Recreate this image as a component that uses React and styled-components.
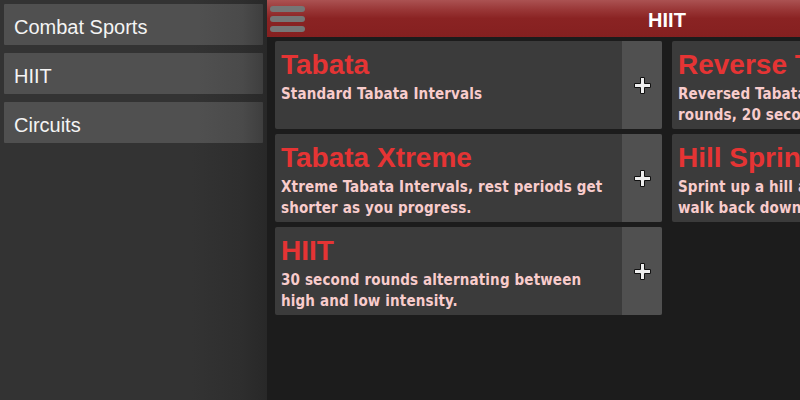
import React from "react";
import styled, { createGlobalStyle } from "styled-components";

const GlobalStyle = createGlobalStyle`
  html, body { margin: 0; padding: 0; background: #1c1c1c; overflow: hidden; }
  #root { width: 800px; height: 400px; overflow: hidden; }
`;

const Layout = styled.div`
  display: flex;
  width: 800px;
  height: 400px;
  overflow: hidden;
`;

const Sidebar = styled.nav`
  flex: 0 0 267px;
  box-sizing: border-box;
  padding: 4px;
  display: flex;
  flex-direction: column;
  gap: 8px;
  background: linear-gradient(to right, #333333 0%, #333333 72%, #2e2e2e 90%, #282828 100%);
`;

const SideItem = styled.div`
  height: 41px;
  box-sizing: border-box;
  display: flex;
  align-items: center;
  padding: 5px 0 0 10px;
  border-radius: 1px;
  background: linear-gradient(to right, #505050 0%, #505050 75%, #4a4a4a 92%, #3e3e3e 100%);
  color: #f4f4f4;
  font-family: "Liberation Sans", Arial, sans-serif;
  font-size: 20px;
`;

const Main = styled.main`
  flex: 0 0 800px;
  background: #1c1c1c;
  display: flex;
  flex-direction: column;
`;

const Header = styled.header`
  height: 37px;
  display: grid;
  grid-template-columns: 1fr auto 1fr;
  align-items: center;
  background: linear-gradient(to bottom, #ab5252 0%, #9a3838 25%, #8a2323 50%, #852020 100%);
`;

const MenuButton = styled.div`
  justify-self: start;
  margin-left: 3px;
  display: flex;
  flex-direction: column;
  gap: 4px;
`;

const MenuBar = styled.span`
  display: block;
  width: 35px;
  height: 6px;
  border-radius: 3px;
  background: #767676;
`;

const Title = styled.h1`
  margin: 0;
  padding-top: 4px;
  color: #ffffff;
  font-family: "Liberation Sans", Arial, sans-serif;
  font-weight: bold;
  font-size: 20px;
`;

const Grid = styled.div`
  display: grid;
  grid-template-columns: 387px 387px;
  grid-template-rows: repeat(3, 88px);
  grid-auto-flow: column;
  column-gap: 10px;
  row-gap: 5px;
  padding: 4px 8px;
`;

const Card = styled.div`
  display: flex;
  background: #3b3b3b;
  border-radius: 2px;
  overflow: hidden;
`;

const CardBody = styled.div`
  flex: 1;
  min-width: 0;
  padding: 8px 8px 0 6px;
`;

const CardTitle = styled.div`
  color: #e53434;
  font-family: "Liberation Sans", Arial, sans-serif;
  font-weight: bold;
  font-size: 28px;
  line-height: 32px;
  margin-bottom: 3px;
  white-space: nowrap;
`;

const CardDesc = styled.div`
  color: #f8cccc;
  font-family: "DejaVu Sans Condensed", "DejaVu Sans", Verdana, sans-serif;
  font-weight: bold;
  font-size: 15px;
  letter-spacing: 0.15px;
  line-height: 21px;
`;

const AddButton = styled.div`
  flex: 0 0 40px;
  background: #505050;
  display: flex;
  align-items: center;
  justify-content: center;
`;

const PlusIcon = () => (
  <svg width="17" height="17" viewBox="0 0 17 17">
    <path
      d="M6.5 0.5 H10.5 V6.5 H16.5 V10.5 H10.5 V16.5 H6.5 V10.5 H0.5 V6.5 H6.5 Z"
      fill="#eeeeee"
      stroke="#111111"
      strokeWidth="1"
    />
  </svg>
);

const categories = ["Combat Sports", "HIIT", "Circuits"];

const workouts = [
  { title: "Tabata", desc: "Standard Tabata Intervals" },
  { title: "Tabata Xtreme", desc: "Xtreme Tabata Intervals, rest periods get shorter as you progress." },
  { title: "HIIT", desc: "30 second rounds alternating between high and low intensity." },
  { title: "Reverse Tabata", desc: "Reversed Tabata Intervals, 10 second rounds, 20 seconds rest." },
  { title: "Hill Sprints", desc: "Sprint up a hill as fast as you can, then walk back down." },
];

export default function App() {
  return (
    <>
      <GlobalStyle />
      <Layout>
        <Sidebar>
          {categories.map((c) => (
            <SideItem key={c}>{c}</SideItem>
          ))}
        </Sidebar>
        <Main>
          <Header>
            <MenuButton>
              <MenuBar />
              <MenuBar />
              <MenuBar />
            </MenuButton>
            <Title>HIIT</Title>
            <span />
          </Header>
          <Grid>
            {workouts.map((w) => (
              <Card key={w.title}>
                <CardBody>
                  <CardTitle>{w.title}</CardTitle>
                  <CardDesc>{w.desc}</CardDesc>
                </CardBody>
                <AddButton>
                  <PlusIcon />
                </AddButton>
              </Card>
            ))}
          </Grid>
        </Main>
      </Layout>
    </>
  );
}
